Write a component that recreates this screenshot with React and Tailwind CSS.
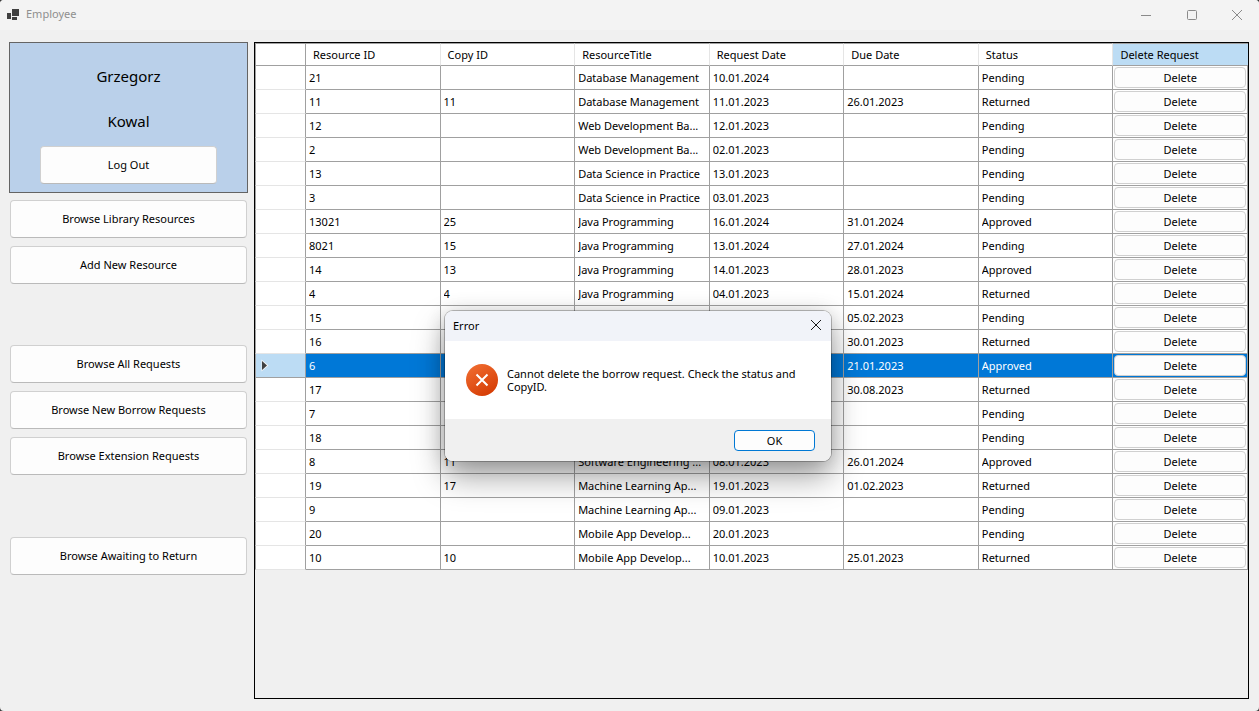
import React from "react";

const columns = ["Resource ID", "Copy ID", "ResourceTitle", "Request Date", "Due Date", "Status"];

const rows = [
  ["21", "", "Database Management", "10.01.2024", "", "Pending"],
  ["11", "11", "Database Management", "11.01.2023", "26.01.2023", "Returned"],
  ["12", "", "Web Development Ba...", "12.01.2023", "", "Pending"],
  ["2", "", "Web Development Ba...", "02.01.2023", "", "Pending"],
  ["13", "", "Data Science in Practice", "13.01.2023", "", "Pending"],
  ["3", "", "Data Science in Practice", "03.01.2023", "", "Pending"],
  ["13021", "25", "Java Programming", "16.01.2024", "31.01.2024", "Approved"],
  ["8021", "15", "Java Programming", "13.01.2024", "27.01.2024", "Pending"],
  ["14", "13", "Java Programming", "14.01.2023", "28.01.2023", "Approved"],
  ["4", "4", "Java Programming", "04.01.2023", "15.01.2024", "Returned"],
  ["15", "", "", "", "05.02.2023", "Pending"],
  ["16", "", "", "", "30.01.2023", "Returned"],
  ["6", "", "", "", "21.01.2023", "Approved"],
  ["17", "", "", "", "30.08.2023", "Returned"],
  ["7", "", "", "", "", "Pending"],
  ["18", "", "", "", "", "Pending"],
  ["8", "11", "Software Engineering ...", "08.01.2023", "26.01.2024", "Approved"],
  ["19", "17", "Machine Learning Ap...", "19.01.2023", "01.02.2023", "Returned"],
  ["9", "", "Machine Learning Ap...", "09.01.2023", "", "Pending"],
  ["20", "", "Mobile App Develop...", "20.01.2023", "", "Pending"],
  ["10", "10", "Mobile App Develop...", "10.01.2023", "25.01.2023", "Returned"],
];

const selectedId = "6";

function NavButton({ children }) {
  return (
    <button
      type="button"
      className="h-[38px] w-full rounded border border-[#d0d0d0] border-b-[#bababa] bg-[#fdfdfd] text-center"
    >
      {children}
    </button>
  );
}

function TitleBar() {
  return (
    <header className="flex h-[30px] shrink-0 items-center bg-[#f3f3f3] pb-px pl-[7px] text-[#8f8f8f]">
      <svg width="12" height="12" viewBox="0 0 12 12" aria-hidden="true" fill="#404040">
        <rect x="0" y="4" width="4" height="6" />
        <rect x="5" y="0" width="7" height="7" />
        <rect x="5" y="8" width="5" height="3" />
      </svg>
      <h1 className="flex-1 pl-[7px]">Employee</h1>
      <div className="flex h-full">
        <button type="button" aria-label="Minimize" className="flex w-[46px] items-center justify-center">
          <svg width="12" height="12" viewBox="0 0 12 12" stroke="#8a8a8a" fill="none">
            <path d="M1 6.5H11" />
          </svg>
        </button>
        <button type="button" aria-label="Maximize" className="flex w-[46px] items-center justify-center">
          <svg width="12" height="12" viewBox="0 0 12 12" stroke="#8a8a8a" fill="none">
            <rect x="1.5" y="1.5" width="9" height="9" rx="1" />
          </svg>
        </button>
        <button type="button" aria-label="Close" className="flex w-11 items-center justify-center">
          <svg width="12" height="12" viewBox="0 0 12 12" stroke="#8a8a8a" fill="none">
            <path d="M1 1L11 11M11 1L1 11" />
          </svg>
        </button>
      </div>
    </header>
  );
}

function Sidebar() {
  return (
    <aside className="flex w-[239px] shrink-0 flex-col">
      <section className="flex flex-col items-center border border-[#646464] bg-[#bad0ea] px-[30px] pt-[21px] pb-2 text-[15px]">
        <p className="h-[45px] leading-6">Grzegorz</p>
        <p className="h-[37px] leading-6">Kowal</p>
        <div className="w-full text-[11px]">
          <NavButton>Log Out</NavButton>
        </div>
      </section>
      <nav className="flex flex-col px-px pt-[7px]">
        <div className="flex flex-col gap-2">
          <NavButton>Browse Library Resources</NavButton>
          <NavButton>Add New Resource</NavButton>
        </div>
        <div className="mt-[61px] flex flex-col gap-2">
          <NavButton>Browse All Requests</NavButton>
          <NavButton>Browse New Borrow Requests</NavButton>
          <NavButton>Browse Extension Requests</NavButton>
        </div>
        <div className="mt-[62px]">
          <NavButton>Browse Awaiting to Return</NavButton>
        </div>
      </nav>
    </aside>
  );
}

function RequestRow({ row }) {
  const selected = row[0] === selectedId;
  const cell = selected
    ? "border-r border-b border-[#a0a0a0] bg-[#0078d7] p-0 pl-[3px] text-white"
    : "border-r border-b border-[#a0a0a0] bg-white p-0 pl-[3px]";
  return (
    <tr className="h-6">
      <th
        scope="row"
        aria-label={selected ? "Current row" : "Row"}
        className={
          selected
            ? "border-r border-b border-l border-r-[#a0a0a0] border-b-[#a0a0a0] border-l-[#a0a0a0] bg-[#bcdcf4] p-0 pl-[5px]"
            : "border-r border-b border-l border-r-[#a0a0a0] border-b-[#e5e5e5] border-l-[#a0a0a0] bg-white p-0"
        }
      >
        {selected && (
          <svg width="8" height="13" viewBox="0 0 8 13" className="block" aria-hidden="true">
            <path d="M0.5 0.5V12.5L7.5 6.5Z" fill="#f4f4f4" />
            <path d="M1 2V11L6 6.5Z" fill="#404040" />
          </svg>
        )}
      </th>
      {row.map((value, i) => (
        <td key={i} className={cell}>
          <span className="block truncate leading-[22px]">{value}</span>
        </td>
      ))}
      <td className={selected ? "border-r border-b border-[#a0a0a0] bg-[#0078d7] p-px" : "border-r border-b border-[#a0a0a0] bg-white p-px"}>
        <button
          type="button"
          className="block h-[21px] w-full rounded border border-[#d0d0d0] bg-[#fdfdfd] text-center leading-[19px] text-black"
        >
          Delete
        </button>
      </td>
    </tr>
  );
}

function RequestTable() {
  const head =
    "border-t border-r border-b border-t-[#a0a0a0] border-r-[#e5e5e5] border-b-[#a0a0a0] bg-white p-0 pt-px pl-[7px] text-left font-normal";
  return (
    <section className="min-w-0 flex-1 border border-black">
      <table className="w-full table-fixed border-separate border-spacing-0">
        <colgroup>
          <col className="w-[51px]" />
          <col span="7" />
        </colgroup>
        <thead>
          <tr className="h-[23px]">
            <td className="border border-[#a0a0a0] bg-white p-0" />
            {columns.map((c) => (
              <th key={c} scope="col" className={head}>
                {c}
              </th>
            ))}
            <th
              scope="col"
              className="border-t border-b border-[#a0a0a0] bg-[#bcdcf4] p-0 pt-px pl-[7px] text-left font-normal"
            >
              Delete Request
            </th>
          </tr>
        </thead>
        <tbody>
          {rows.map((row) => (
            <RequestRow key={row[0]} row={row} />
          ))}
        </tbody>
      </table>
    </section>
  );
}

function ErrorDialog() {
  return (
    <div
      role="alertdialog"
      aria-labelledby="error-title"
      aria-describedby="error-message"
      className="absolute top-[311px] left-[445px] w-[386px] overflow-hidden rounded-lg bg-white shadow-[0_0_0_1px_rgba(0,0,0,0.25),0_16px_32px_rgba(0,0,0,0.36),0_2px_20px_rgba(0,0,0,0.16)]"
    >
      <div className="flex h-[30px] items-center justify-between bg-[#f1f3f9] pr-[9px] pl-2">
        <h2 id="error-title">Error</h2>
        <button type="button" aria-label="Close dialog" className="flex h-[26px] w-3 items-center justify-center pb-0.5">
          <svg width="12" height="12" viewBox="0 0 12 12" stroke="#1a1a1a" fill="none" className="shrink-0">
            <path d="M1 1L11 11M11 1L1 11" />
          </svg>
        </button>
      </div>
      <div className="flex h-[78px] items-center gap-[9px] pl-[21px]">
        <svg width="32" height="32" viewBox="0 0 32 32" aria-hidden="true">
          <defs>
            <linearGradient id="error-fill" x1="0.2" y1="0" x2="0.8" y2="1">
              <stop offset="0" stopColor="#f06c30" />
              <stop offset="1" stopColor="#d43a02" />
            </linearGradient>
          </defs>
          <circle cx="16" cy="16" r="16" fill="url(#error-fill)" />
          <path d="M10.5 10.5L21.5 21.5M21.5 10.5L10.5 21.5" stroke="#fff" strokeWidth="2" />
        </svg>
        <p id="error-message" className="w-[310px] leading-[13px]">
          Cannot delete the borrow request. Check the status and CopyID.
        </p>
      </div>
      <div className="flex h-[42px] items-center justify-end bg-[#f0f0f0] pr-4">
        <button type="button" className="h-[21px] w-[81px] rounded border border-[#0078d4] bg-[#fdfdfd] leading-[19px]">
          OK
        </button>
      </div>
    </div>
  );
}

export default function App() {
  return (
    <div className="bg-[#3a3a3a] font-['Noto_Sans','Open_Sans',sans-serif] text-[11px] text-black">
      <div className="relative flex min-h-screen flex-col overflow-hidden rounded bg-[#f0f0f0]">
        <TitleBar />
        <main className="flex flex-1 gap-[6px] pt-3 pr-[10px] pb-3 pl-[9px]">
          <Sidebar />
          <RequestTable />
        </main>
        <ErrorDialog />
      </div>
    </div>
  );
}
